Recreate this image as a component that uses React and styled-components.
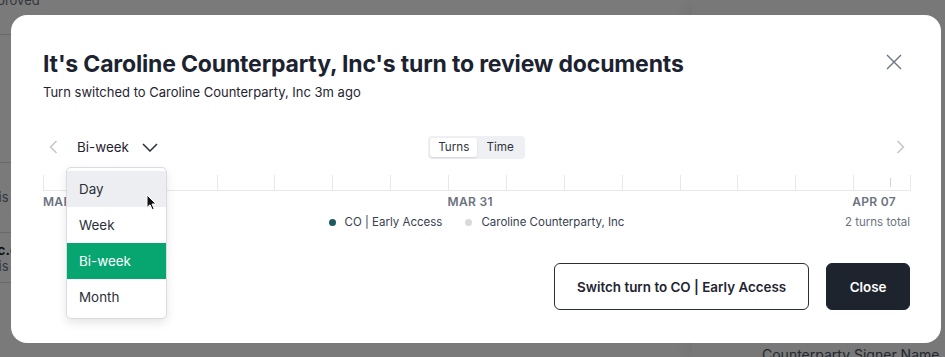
import React from "react";
import styled, { createGlobalStyle } from "styled-components";

const Global = createGlobalStyle`
  html, body { margin: 0; padding: 0; }
  body {
    font-family: Inter, "Noto Sans", "Liberation Sans", sans-serif;
    background: #ffffff;
    -webkit-font-smoothing: antialiased;
  }
  * { box-sizing: border-box; }
`;

const Page = styled.div`
  position: relative;
  width: 945px;
  height: 357px;
  overflow: hidden;
  display: flex;
  background: #ffffff;
`;

const BgMain = styled.div`
  flex: 1;
  display: flex;
  flex-direction: column;
`;

const BgRow = styled.div`
  height: ${(p) => p.$h}px;
  border-bottom: 1px solid #d9dbe0;
  display: flex;
  flex-direction: column;
  justify-content: ${(p) => p.$justify || "center"};
  margin-left: -20px;
  font-size: 13px;
  color: #6b7280;
  line-height: 17px;
`;

const BgStrong = styled.span`
  color: #111827;
  font-weight: 600;
  font-size: 14px;
`;

const BgSide = styled.div`
  width: 253px;
  background: #fafafa;
  box-shadow: -8px 0 12px rgba(0, 0, 0, 0.06);
  display: flex;
  flex-direction: column;
  justify-content: flex-end;
  padding: 0 0 0 70px;
`;

const BgLabel = styled.div`
  font-size: 14px;
  color: #4b5563;
  line-height: 16px;
  margin-bottom: -6px;
`;

const Overlay = styled.div`
  position: absolute;
  inset: 0;
  background: rgba(0, 0, 0, 0.52);
  padding: 15px 4px 14px 11px;
  display: flex;
`;

const Modal = styled.div`
  position: relative;
  flex: 1;
  background: #ffffff;
  border-radius: 16px;
  padding: 33px 31px 33px 32px;
  display: flex;
  flex-direction: column;
  color: #1f2430;
`;

const Header = styled.div`
  display: flex;
  justify-content: space-between;
  align-items: flex-start;
`;

const Title = styled.h2`
  margin: 0;
  font-size: 23px;
  line-height: 32px;
  font-weight: 700;
  color: #1c2330;
  letter-spacing: -0.17px;
`;

const CloseIcon = styled.button`
  width: 32px;
  height: 32px;
  margin-top: -2px;
  border: none;
  background: transparent;
  padding: 0;
  display: flex;
  align-items: center;
  justify-content: center;
  color: #6b7280;
`;

const Subtitle = styled.p`
  margin: 2px 0 0;
  font-size: 13px;
  line-height: 20px;
  color: #1f2430;
`;

const Controls = styled.div`
  margin-top: 33px;
  display: grid;
  grid-template-columns: 1fr auto 1fr;
  align-items: center;
  height: 24px;
`;

const LeftGroup = styled.div`
  display: flex;
  align-items: center;
  gap: 3px;
`;

const NavButton = styled.button`
  width: 20px;
  height: 24px;
  border: none;
  background: transparent;
  padding: 0;
  display: flex;
  align-items: center;
  justify-content: center;
  color: #c3c6cc;
  justify-self: ${(p) => (p.$end ? "end" : "start")};
`;

const SelectWrap = styled.div`
  position: relative;
`;

const Trigger = styled.button`
  border: none;
  background: transparent;
  padding: 0 0 0 11px;
  height: 24px;
  display: flex;
  align-items: center;
  gap: 13px;
  font-family: inherit;
  font-size: 13.4px;
  color: #1f2430;
`;

const Menu = styled.div`
  position: absolute;
  top: 32px;
  left: 0;
  width: 101px;
  background: #ffffff;
  border: 1px solid #d9dbe0;
  border-radius: 5px;
  padding: 3px 0;
  box-shadow: 0 4px 10px rgba(0, 0, 0, 0.1);
  z-index: 5;
`;

const MenuItem = styled.div`
  height: 36px;
  display: flex;
  align-items: center;
  padding-left: 12px;
  font-size: 13.4px;
  color: ${(p) => (p.$selected ? "#ffffff" : "#2a2f37")};
  background: ${(p) =>
    p.$selected ? "#07a671" : p.$hover ? "#eceef2" : "transparent"};
`;

const Cursor = styled.svg`
  position: absolute;
  left: 79px;
  top: 26px;
`;

const Segmented = styled.div`
  display: flex;
  background: #eef0f3;
  border-radius: 4px;
  padding: 2px;
  height: 23px;
`;

const Segment = styled.div`
  padding: 0 ${(p) => (p.$active ? 8 : 9)}px;
  display: flex;
  align-items: center;
  font-size: 11.7px;
  color: #2f3540;
  border-radius: 3px;
  background: ${(p) => (p.$active ? "#ffffff" : "transparent")};
  box-shadow: ${(p) => (p.$active ? "0 1px 2px rgba(0,0,0,0.12)" : "none")};
`;

const Timeline = styled.div`
  margin-top: 16px;
  display: grid;
  grid-template-columns: repeat(15, 1fr);
  border-bottom: 1px solid #e6e8eb;
  margin-right: -1px;
`;

const Tick = styled.div`
  position: relative;
  height: 15px;
  border-left: 1px solid #e6e8eb;
  border-right: ${(p) => (p.$last ? "1px solid #e6e8eb" : "none")};
`;

const Marker = styled.span`
  position: absolute;
  left: 36px;
  top: 3px;
  height: 9px;
  border-left: 1px solid #cfd2d7;
`;

const Labels = styled.div`
  display: grid;
  grid-template-columns: repeat(15, 1fr);
  margin-top: 3px;
  height: 16px;
`;

const DateLabel = styled.div`
  grid-column: ${(p) => p.$col};
  font-size: 12px;
  line-height: 16px;
  font-weight: 600;
  letter-spacing: 0.3px;
  color: #6b7280;
  white-space: nowrap;
`;

const LegendRow = styled.div`
  margin-top: 4px;
  display: grid;
  grid-template-columns: 1fr auto 1fr;
  align-items: center;
  height: 16px;
`;

const Legend = styled.div`
  grid-column: 2;
  display: flex;
  align-items: center;
  gap: 23px;
`;

const LegendItem = styled.div`
  display: flex;
  align-items: center;
  gap: 9px;
  font-size: 11.5px;
  color: #374151;
`;

const Dot = styled.span`
  width: 7px;
  height: 7px;
  border-radius: 50%;
  background: ${(p) => p.$color};
`;

const Total = styled.div`
  justify-self: end;
  font-size: 11.5px;
  color: #6b7280;
`;

const Actions = styled.div`
  margin-top: auto;
  display: flex;
  justify-content: flex-end;
  gap: 17px;
`;

const Button = styled.button`
  height: 47px;
  padding: 0 ${(p) => (p.$primary ? 22.5 : 22)}px;
  border-radius: 6px;
  font-family: inherit;
  font-size: 13.4px;
  font-weight: 600;
  color: ${(p) => (p.$primary ? "#ffffff" : "#1f2430")};
  background: ${(p) => (p.$primary ? "#1e242e" : "#ffffff")};
  border: 1px solid ${(p) => (p.$primary ? "#1e242e" : "#2a2f37")};
`;

const ChevronLeft = () => (
  <svg width="9" height="14" viewBox="0 0 9 14" fill="none">
    <path d="M7.5 1 L1.5 7 L7.5 13" stroke="currentColor" strokeWidth="1.5" />
  </svg>
);

const ChevronRight = () => (
  <svg width="9" height="14" viewBox="0 0 9 14" fill="none">
    <path d="M1.5 1 L7.5 7 L1.5 13" stroke="currentColor" strokeWidth="1.5" />
  </svg>
);

const ChevronDown = () => (
  <svg width="16" height="9" viewBox="0 0 16 9" fill="none">
    <path d="M1 1 L8 8 L15 1" stroke="#2a2f37" strokeWidth="1.5" />
  </svg>
);

const XIcon = () => (
  <svg width="16" height="16" viewBox="0 0 16 16" fill="none">
    <path d="M1 1 L15 15 M15 1 L1 15" stroke="currentColor" strokeWidth="1.4" />
  </svg>
);

const ticks = Array.from({ length: 15 });

export default function App() {
  return (
    <>
      <Global />
      <Page>
        <BgMain>
          <BgRow $h={35} $justify="flex-start">
            <span style={{ marginTop: -8 }}>Approved</span>
          </BgRow>
          <BgRow $h={128} />
          <BgRow $h={70}>
            <span>Finis</span>
          </BgRow>
          <BgRow $h={50}>
            <BgStrong>doc.c</BgStrong>
            <span>Finis</span>
          </BgRow>
        </BgMain>
        <BgSide>
          <BgLabel>Counterparty Signer Name</BgLabel>
        </BgSide>
        <Overlay>
          <Modal>
            <Header>
              <Title>It's Caroline Counterparty, Inc's turn to review documents</Title>
              <CloseIcon aria-label="Close">
                <XIcon />
              </CloseIcon>
            </Header>
            <Subtitle>Turn switched to Caroline Counterparty, Inc 3m ago</Subtitle>

            <Controls>
              <LeftGroup>
                <NavButton aria-label="Previous">
                  <ChevronLeft />
                </NavButton>
                <SelectWrap>
                  <Trigger>
                    Bi-week
                    <ChevronDown />
                  </Trigger>
                  <Menu>
                    <MenuItem $hover>Day</MenuItem>
                    <MenuItem>Week</MenuItem>
                    <MenuItem $selected>Bi-week</MenuItem>
                    <MenuItem>Month</MenuItem>
                    <Cursor width="12" height="17" viewBox="0 0 12 17">
                      <path
                        d="M1 1 L1 13.5 L4 10.8 L6.2 15.6 L8.2 14.7 L6 10 L10 10 Z"
                        fill="#111"
                        stroke="#fff"
                        strokeWidth="1"
                        strokeLinejoin="round"
                      />
                    </Cursor>
                  </Menu>
                </SelectWrap>
              </LeftGroup>
              <Segmented>
                <Segment $active>Turns</Segment>
                <Segment>Time</Segment>
              </Segmented>
              <NavButton $end aria-label="Next">
                <ChevronRight />
              </NavButton>
            </Controls>

            <Timeline>
              {ticks.map((_, i) => (
                <Tick key={i} $last={i === 14}>
                  {i === 14 && <Marker />}
                </Tick>
              ))}
            </Timeline>
            <Labels>
              <DateLabel $col={1}>MAR 24</DateLabel>
              <DateLabel $col={8}>MAR 31</DateLabel>
              <DateLabel $col={15}>APR 07</DateLabel>
            </Labels>

            <LegendRow>
              <Legend>
                <LegendItem>
                  <Dot $color="#1d5a5f" />
                  CO | Early Access
                </LegendItem>
                <LegendItem>
                  <Dot $color="#d7d9dd" />
                  Caroline Counterparty, Inc
                </LegendItem>
              </Legend>
              <Total>2 turns total</Total>
            </LegendRow>

            <Actions>
              <Button>Switch turn to CO | Early Access</Button>
              <Button $primary>Close</Button>
            </Actions>
          </Modal>
        </Overlay>
      </Page>
    </>
  );
}
